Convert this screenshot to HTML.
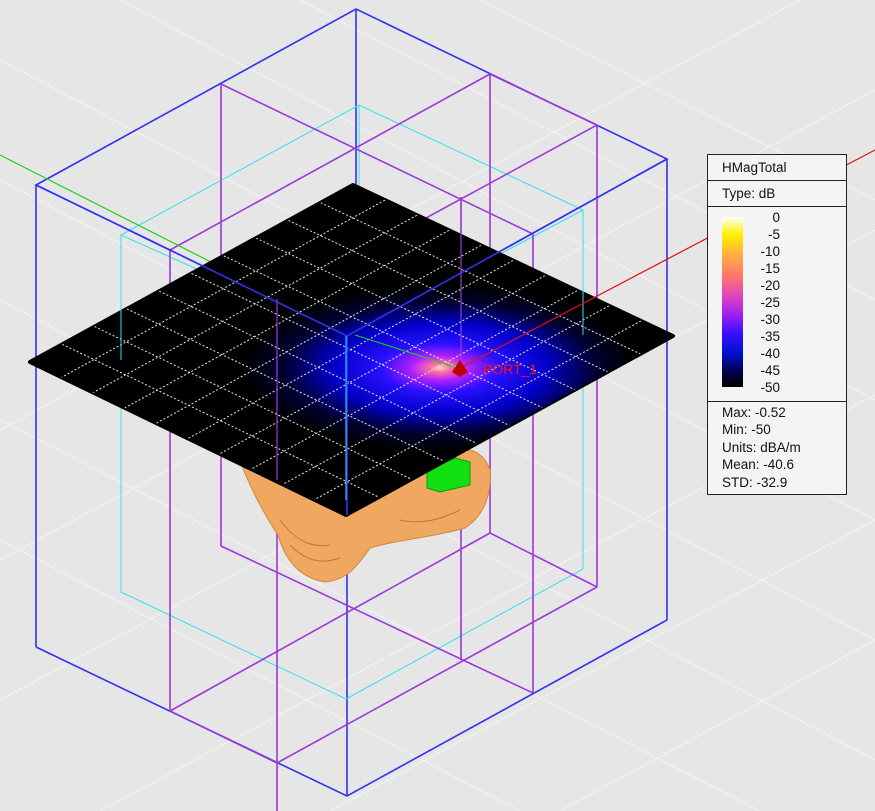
<!DOCTYPE html>
<html><head><meta charset="utf-8"><style>
html,body{margin:0;padding:0;background:#e6e6e6;}
#c{position:relative;width:875px;height:811px;overflow:hidden;font-family:"Liberation Sans",sans-serif;}
#leg{position:absolute;left:707px;top:154px;width:138px;height:339px;border:1px solid #222;background:#f4f4f4;font-size:13.5px;color:#111;}
#leg .r{border-bottom:1px solid #222;padding-left:14px;height:25px;line-height:25px;}
#bar{position:absolute;left:14px;top:62px;width:21px;height:170px;background:linear-gradient(to bottom,#ffffff 0%,#fff200 10%,#ffb040 22%,#ff7070 36%,#e040c0 47%,#9a20f0 58%,#3a10ff 68%,#0010d0 80%,#000040 92%,#000000 100%);}
#labs{position:absolute;left:48px;top:54px;line-height:17px;text-align:right;width:24px;}
#stats{position:absolute;left:14px;top:249px;line-height:17.4px;}
#sep{position:absolute;left:0;top:246px;width:138px;border-top:1px solid #222;}
</style></head><body><div id="c">
<svg width="875" height="811" viewBox="0 0 875 811" style="position:absolute;left:0;top:0">
<defs>
<radialGradient id="g" cx="440" cy="368" r="195" gradientUnits="userSpaceOnUse" gradientTransform="translate(440 368) scale(1 0.42) translate(-440 -368)">
<stop offset="0" stop-color="#ffe0c0"/><stop offset="0.05" stop-color="#ff70a0"/><stop offset="0.15" stop-color="#b020ff"/><stop offset="0.3" stop-color="#2a10ff"/><stop offset="0.55" stop-color="#0000c8"/><stop offset="0.8" stop-color="#000030"/><stop offset="1" stop-color="#000"/></radialGradient>
<clipPath id="pc"><polygon points="353,185 673,336 346,515 30,362"/></clipPath>
</defs>
<g stroke="#f3f3f3" stroke-width="1">
<path d="M0,60 L875,520 M0,180 L875,640 M0,300 L875,760 M0,420 L760,811 M0,540 L520,811 M120,0 L875,400 M300,0 L875,300 M480,0 L875,200 M0,700 L875,230 M0,560 L875,90 M0,430 L800,0 M100,811 L875,395 M330,811 L875,520 M560,811 L875,640"/>
</g>
<g fill="none" stroke="#3232f0" stroke-width="1.6">
<path d="M36,647 L347,796 L667,620 M36,185 L36,647 M667,159 L667,620 M347,336 L347,796 M36,185 L356,9 L667,159 L347,336 Z M356,9 L356,300"/>
</g>
<g fill="none" stroke="#30e0f0" stroke-width="1">
<path d="M121,235 L359,105 L583,210 L346,336 Z M121,235 L121,592 L346,699 L583,569 L583,210 M359,105 L359,250"/>
</g>
<g fill="none" stroke="#9a3ad8" stroke-width="1.6">
<path d="M221,84 L533,234 M490,74 L170,250 M597,125 L277,299 M490,74 L597,125 M221,84 L221,546 M490,74 L490,533 M597,125 L597,587 M170,250 L170,711 M277,299 L277,811 M533,234 L533,693 M221,546 L533,693 M490,533 L170,711 M597,587 L277,763 M490,533 L597,587 M170,711 L277,763 M461,197 L461,660"/>
</g>
<path d="M0,155 L355,335" stroke="#20d020" stroke-width="1.2"/>
<path d="M238,455 C250,490 268,520 278,535 C285,560 300,578 325,582 C345,580 355,570 370,548 C395,540 430,538 465,528 C485,515 492,492 490,470 C486,458 478,452 470,450 Z" fill="#f0a860" stroke="#d08840" stroke-width="1"/>
<path d="M280,520 C295,540 310,548 330,545 M290,545 C305,560 320,565 340,558 M400,520 C420,525 440,520 460,510" stroke="#c07830" fill="none"/>
<polygon points="427,470 455,458 470,462 470,485 440,492 427,488" fill="#10e010" stroke="#08a008"/>
<polygon points="353,185 673,336 346,515 30,362" fill="#000" stroke="#000" stroke-width="4" stroke-linejoin="round"/>
<rect x="0" y="0" width="875" height="811" fill="url(#g)" clip-path="url(#pc)"/>
<g stroke="#e8e8e8" stroke-width="1" stroke-dasharray="2,2" clip-path="url(#pc)">
<path d="M320.7,202.7L640.3,353.9M288.4,220.4L607.6,371.8M256.1,238.1L574.9,389.7M223.8,255.8L542.2,407.6M191.5,273.5L509.5,425.5M159.2,291.2L476.8,443.4M126.9,308.9L444.1,461.3M94.6,326.6L411.4,479.2M62.3,344.3L378.7,497.1M385,200.1L61.6,377.3M417,215.2L93.2,392.6M449,230.3L124.8,407.9M481,245.4L156.4,423.2M513,260.5L188,438.5M545,275.6L219.6,453.8M577,290.7L251.2,469.1M609,305.8L282.8,484.4M641,320.9L314.4,499.7"/>
</g>
<g fill="none" stroke="#3232f0" stroke-width="1.6"><path d="M36,185 L347,336 L667,159 M347,336 L347,515"/></g>
<g stroke="#30e0f0" stroke-width="1" fill="none"><path d="M346,336 L346,500 M121,250 L121,360 M583,220 L583,335"/></g>
<g stroke="#9a3ad8" stroke-width="1.2" fill="none"><path d="M461,197 L461,370 M277,299 L277,480"/></g>
<path d="M355,335 L458,368" stroke="#20d020" stroke-width="1"/>
<path d="M460,368 L875,150" stroke="#e01010" stroke-width="1.2"/>
<path d="M460,360 L468,372 L460,377 L452,372 Z" fill="#c00000"/>
<text x="483" y="374" fill="#ff1010" font-family="Liberation Sans" font-size="14">PORT_1</text>
</svg>
<div id="leg">
<div class="r">HMagTotal</div>
<div class="r">Type: dB</div>
<div id="bar"></div>
<div id="labs">0<br>-5<br>-10<br>-15<br>-20<br>-25<br>-30<br>-35<br>-40<br>-45<br>-50</div>
<div id="sep"></div>
<div id="stats">Max: -0.52<br>Min: -50<br>Units: dBA/m<br>Mean: -40.6<br>STD: -32.9</div>
</div>
</div></body></html>
